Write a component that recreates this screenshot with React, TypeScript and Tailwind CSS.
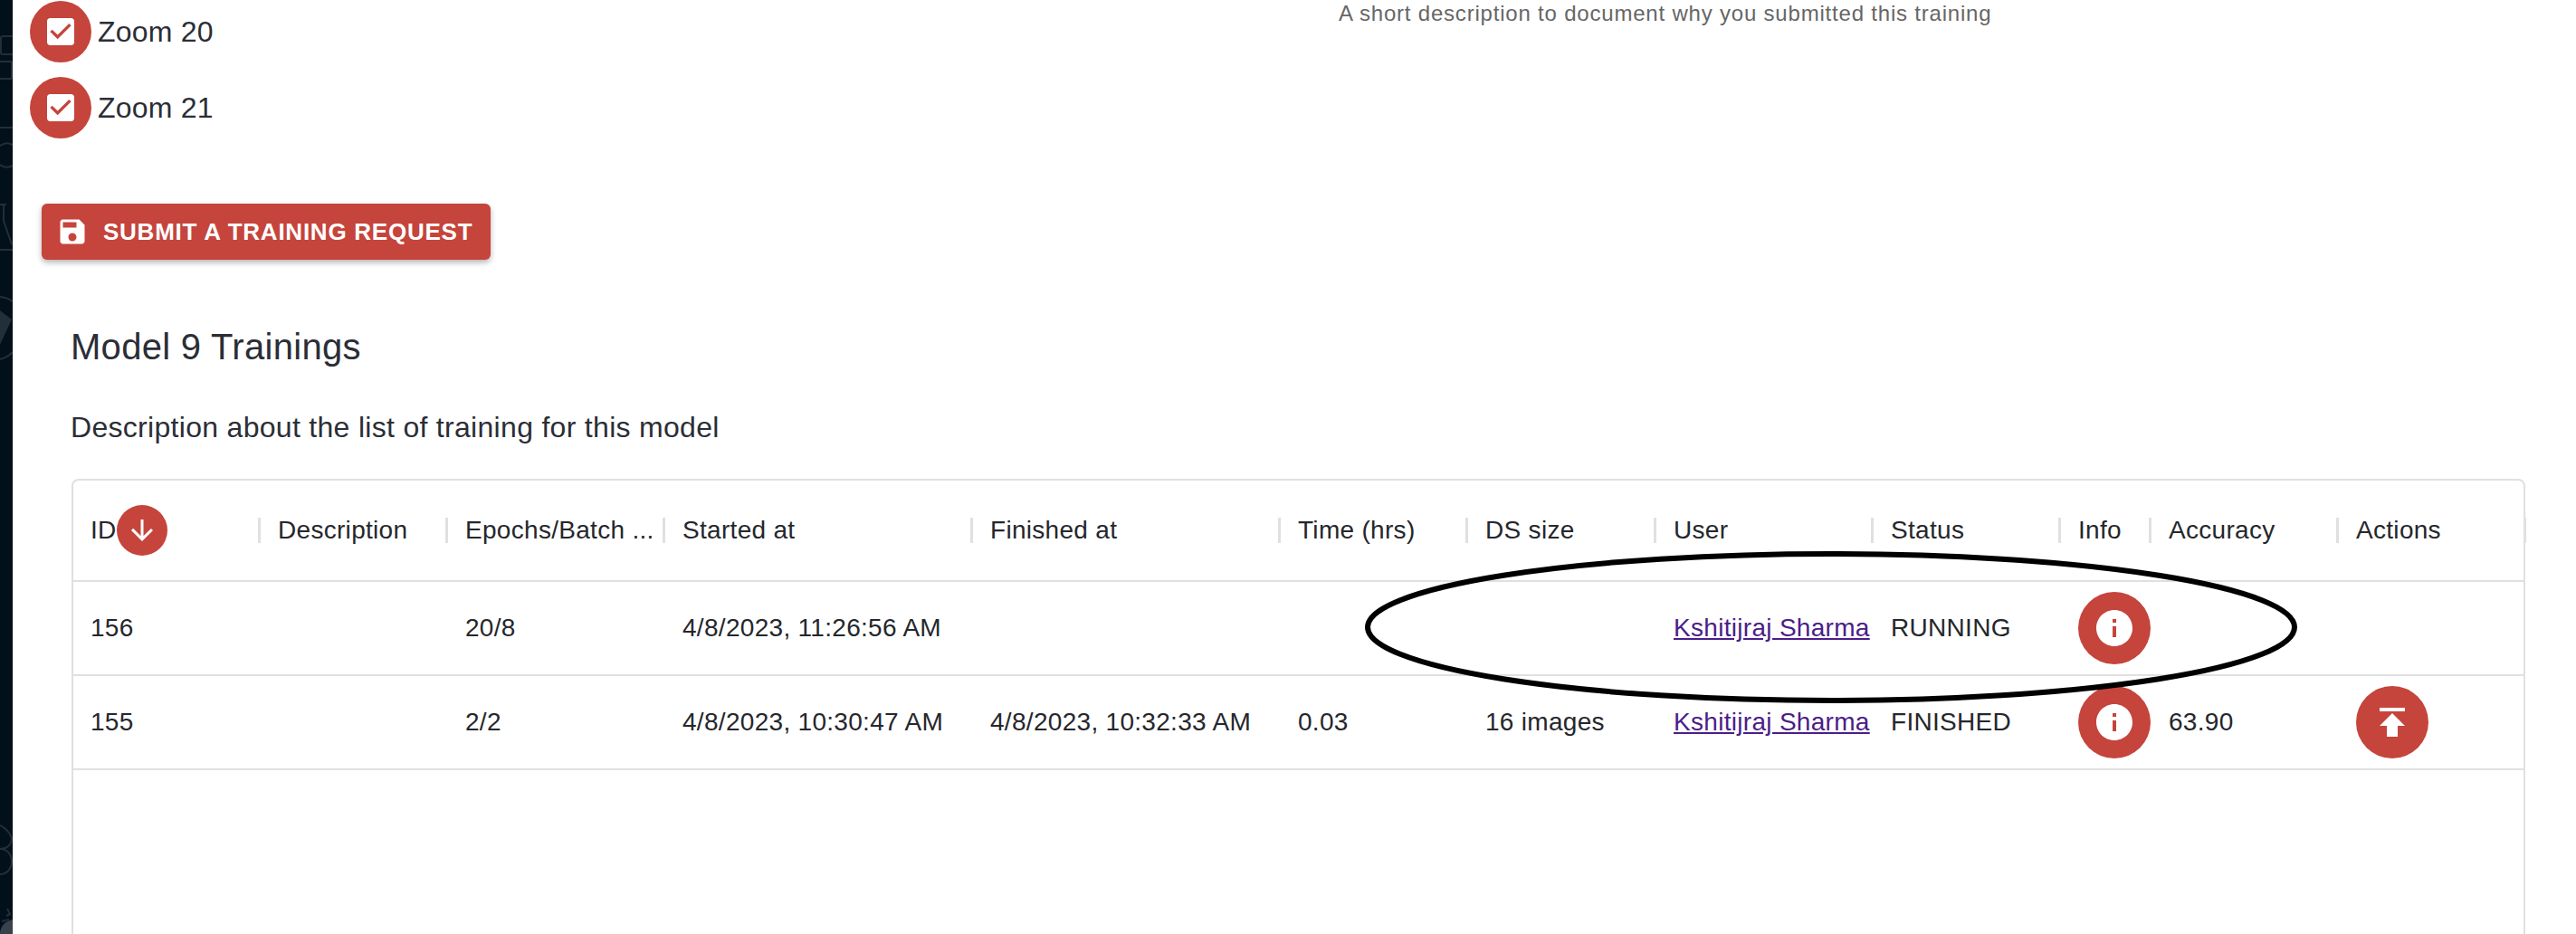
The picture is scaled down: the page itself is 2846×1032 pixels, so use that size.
const RED = "bg-[#c5443c]";
const cols = "grid grid-cols-[207px_207px_240px_340px_340px_207px_208px_240px_207px_100px_207px_207px]";

function CheckIcon() {
  return (
    <svg viewBox="0 0 24 24" className="w-[40px] h-[40px]" fill="#fff">
      <path d="M19 3H5c-1.11 0-2 .9-2 2v14c0 1.1.89 2 2 2h14c1.11 0 2-.9 2-2V5c0-1.1-.89-2-2-2zm-9 14l-5-5 1.41-1.41L10 14.17l7.59-7.59L19 8l-9 9z" />
    </svg>
  );
}

function ZoomCheck({ label }: { label: string }) {
  return (
    <div className="flex items-center h-[68px] gap-[7px]">
      <span className={`w-[68px] h-[68px] rounded-full ${RED} flex items-center justify-center`}>
        <CheckIcon />
      </span>
      <span className="text-[32px] tracking-[0.2px] text-[#2b2e36]">{label}</span>
    </div>
  );
}

function RoundIcon({ d }: { d: string }) {
  return (
    <span className={`w-[80px] h-[80px] rounded-full ${RED} flex items-center justify-center shrink-0`}>
      <svg viewBox="0 0 24 24" className="w-[48px] h-[48px]" fill="#fff">
        <path d={d} />
      </svg>
    </span>
  );
}

const INFO = "M12 2C6.48 2 2 6.48 2 12s4.48 10 10 10 10-4.48 10-10S17.52 2 12 2zm1 15h-2v-6h2v6zm0-8h-2V7h2v2z";
const PUBLISH = "M5 4v2h14V4H5zm0 10h4v6h6v-6h4l-7-7-7 7z";

function HeaderCell({ label, sort }: { label: string; sort?: boolean }) {
  return (
    <div className="relative flex items-center pl-[19px] h-[110px] whitespace-nowrap">
      <span>{label}</span>
      {sort && (
        <span className={`w-[56px] h-[56px] rounded-full ${RED} flex items-center justify-center`}>
          <svg viewBox="0 0 24 24" className="w-[36px] h-[36px]" fill="#fff">
            <path d="M20 12l-1.41-1.41L13 16.17V4h-2v12.17l-5.58-5.59L4 12l8 8 8-8z" />
          </svg>
        </span>
      )}
      <span className="absolute right-[0px] top-[41px] h-[28px] w-[3px] bg-[#e0e0e0]" />
    </div>
  );
}

function Cell({ children }: { children?: React.ReactNode }) {
  return <div className="flex items-center pl-[19px] h-[102px] whitespace-nowrap">{children}</div>;
}

function Link() {
  return <a href="#" className="underline text-[#4c1d89]">Kshitijraj Sharma</a>;
}

const headers = ["Description", "Epochs/Batch ...", "Started at", "Finished at", "Time (hrs)", "DS size", "User", "Status", "Info", "Accuracy", "Actions"];

export default function App() {
  return (
    <div className="relative flex h-[1032px] overflow-hidden bg-white font-['Liberation_Sans',Arial,sans-serif]">
      <aside className="w-[14px] shrink-0 bg-[#02101c] overflow-hidden">
        <svg viewBox="0 0 14 1032" className="w-[14px] h-[1032px]" fill="none" stroke="#222e3a" strokeWidth="2">
          <path d="M14 40H3a2 2 0 0 0-2 2v16a2 2 0 0 0 2 2h11" />
          <path d="M0 68h12a1 1 0 0 1 1 1v17a1 1 0 0 1-1 1H0" />
          <path d="M0 141h14" />
          <path d="M14 160a13 13 0 0 0-14 1M0 182a13 13 0 0 0 14 1" />
          <path d="M0 226h7M4 226v18l9 26M0 276h14" />
          <path d="M0 328a28 28 0 0 1 14 5M0 397a30 30 0 0 0 14-8" />
          <path d="M0 343l13 10-13 28z" fill="#222e3a" stroke="none" />
          <path d="M0 912a26 26 0 0 1 13 14c0 8-6 12-13 12 8 0 13 6 13 14 0 8-6 14-13 14" />
          <path d="M8 1004l3 6-4 2M2 1018l8-2" />
          <path d="M0 1032c0-8 5-14 14-16v16z" fill="#38424d" stroke="none" />
        </svg>
      </aside>

      <main className="flex-1 min-w-0 pt-[1px]">
        <div className="flex pl-[19px]">
          <div className="w-[1446px] shrink-0 flex flex-col gap-[16px]">
            <ZoomCheck label="Zoom 20" />
            <ZoomCheck label="Zoom 21" />
          </div>
          <p className="text-[24px] leading-[28px] tracking-[0.8px] text-[#666666]">
            A short description to document why you submitted this training
          </p>
        </div>

        <button className={`mt-[72px] ml-[32px] h-[62px] w-[496px] flex items-center pl-[16px] gap-[16px] rounded-[6px] ${RED} text-white font-bold text-[26px] tracking-[0.75px] shadow-[0_3px_6px_rgba(0,0,0,0.3)]`}>
          <svg viewBox="0 0 24 24" className="w-[36px] h-[36px] shrink-0" fill="#fff">
            <path d="M17 3H5c-1.11 0-2 .9-2 2v14c0 1.1.89 2 2 2h14c1.1 0 2-.9 2-2V7l-4-4zm-5 16c-1.66 0-3-1.34-3-3s1.34-3 3-3 3 1.34 3 3-1.34 3-3 3zm3-10H5V5h10v4z" />
          </svg>
          SUBMIT A TRAINING REQUEST
        </button>

        <div className="ml-[64px] w-[2712px]">
          <h2 className="mt-[64px] text-[40px] leading-[64px] tracking-[0.3px] text-[#2b2e36]">Model 9 Trainings</h2>
          <p className="mt-[33px] text-[32px] leading-[48px] tracking-[0.3px] text-[#2b2e36]">Description about the list of training for this model</p>

          <div className="mt-[33px] ml-[1px] h-[600px] border-2 border-[#e0e0e0] rounded-[8px] text-[28px] tracking-[0.3px] text-[#25272c]">
            <div className={`${cols} border-b-2 border-[#e0e0e0]`}>
              <HeaderCell label="ID" sort />
              {headers.map((h) => (
                <HeaderCell key={h} label={h} />
              ))}
            </div>
            <div className={`${cols} border-b-2 border-[#e0e0e0]`}>
              <Cell>156</Cell>
              <Cell />
              <Cell>20/8</Cell>
              <Cell>4/8/2023, 11:26:56 AM</Cell>
              <Cell />
              <Cell />
              <Cell />
              <Cell><Link /></Cell>
              <Cell>RUNNING</Cell>
              <Cell><RoundIcon d={INFO} /></Cell>
              <Cell />
              <Cell />
            </div>
            <div className={`${cols} border-b-2 border-[#e0e0e0]`}>
              <Cell>155</Cell>
              <Cell />
              <Cell>2/2</Cell>
              <Cell>4/8/2023, 10:30:47 AM</Cell>
              <Cell>4/8/2023, 10:32:33 AM</Cell>
              <Cell>0.03</Cell>
              <Cell>16 images</Cell>
              <Cell><Link /></Cell>
              <Cell>FINISHED</Cell>
              <Cell><RoundIcon d={INFO} /></Cell>
              <Cell>63.90</Cell>
              <Cell><RoundIcon d={PUBLISH} /></Cell>
            </div>
          </div>
        </div>
      </main>

      <svg className="absolute left-[1507px] top-[608px] w-[1032px] h-[170px] pointer-events-none" viewBox="0 0 1032 170" fill="none">
        <ellipse cx="516" cy="85" rx="512" ry="81" stroke="#000" strokeWidth="6" />
      </svg>
    </div>
  );
}
